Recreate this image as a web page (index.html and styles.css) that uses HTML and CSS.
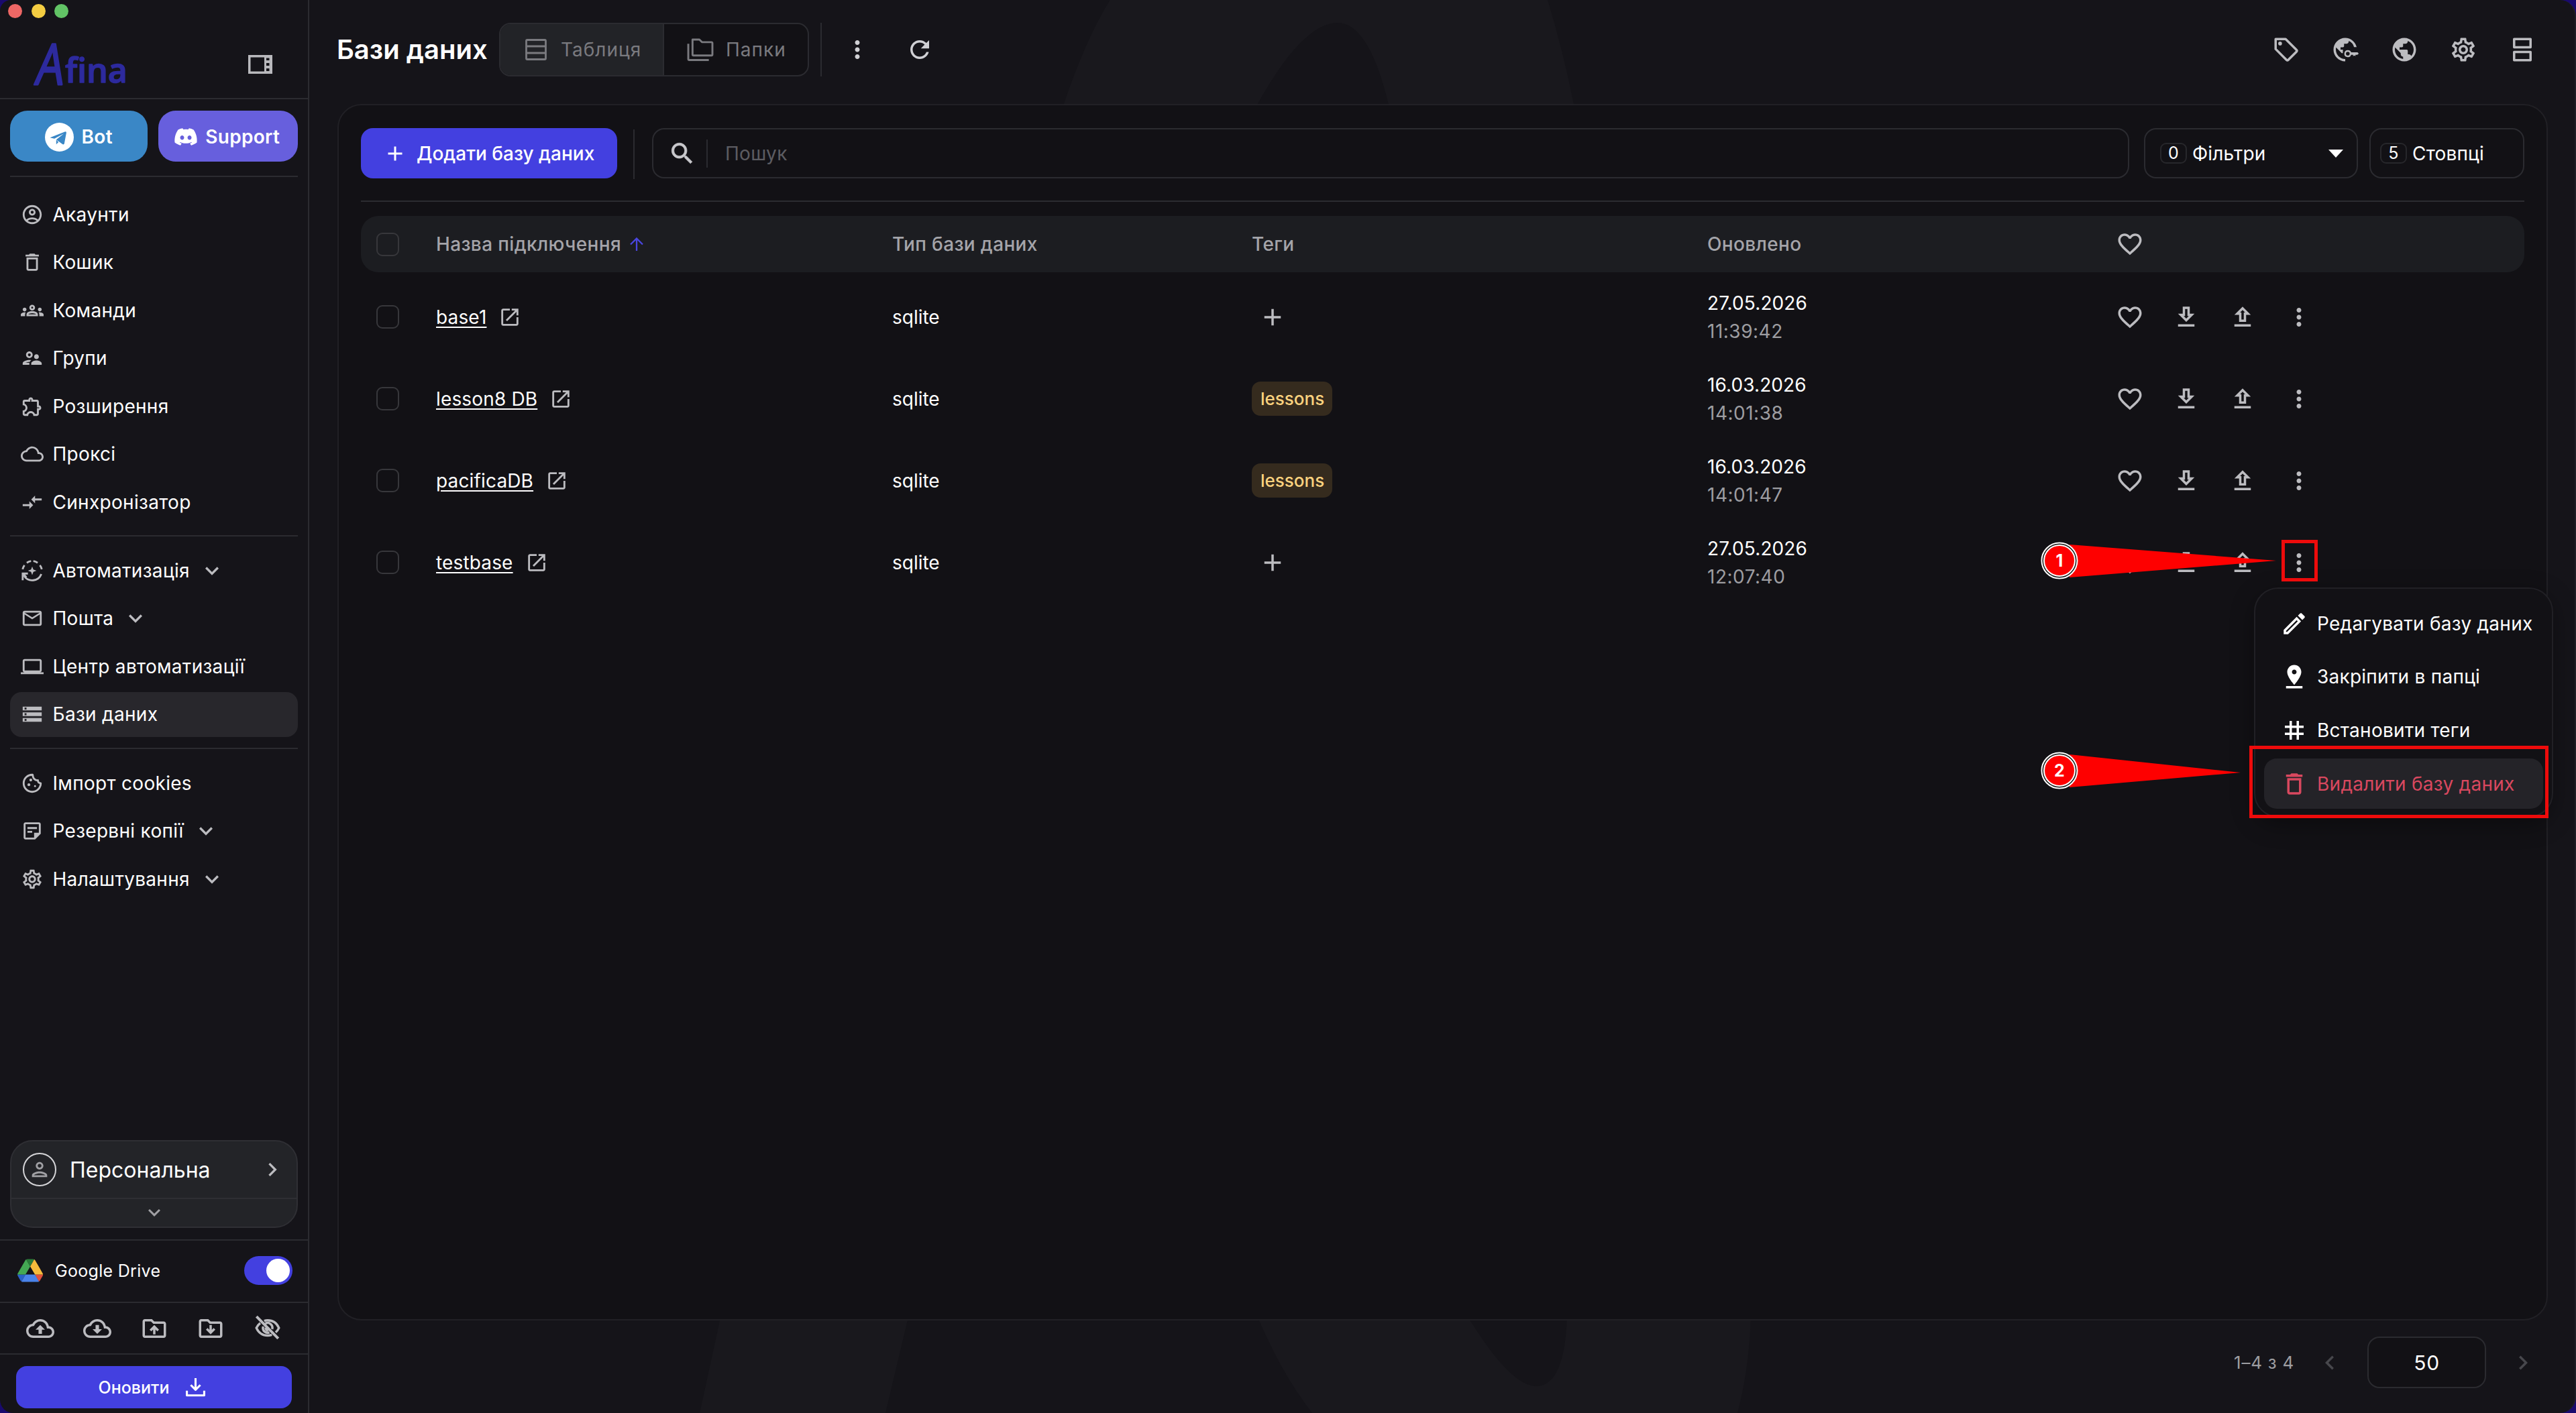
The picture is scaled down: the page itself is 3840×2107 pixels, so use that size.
FILE: index.html
```html
<!DOCTYPE html>
<html lang="uk">
<head>
    <meta charset="utf-8" />
    <title>Afina - Бази даних</title>
    <link rel="stylesheet" href="styles.css">
</head>
<body>
    <!-- icons -->
    <svg class="sprite">
        <symbol id="panel" viewBox="0 0 36 28"><path fill-rule="evenodd" d="M0 0h36v28H0zM3.5 3.500v21H24v-21zM27 4.500v3.500h4.500V4.500zM27 12v4h4.500v-4zM27 20v4h4.500v-4z"/></symbol>
        <symbol id="telegram" viewBox="0 0 128 128"><circle cx="64" cy="64" r="64" fill="#fff"/><path fill="#3a87c6" d="M22 66 88 40q8-2 7 5L86 92q-2 7-8 3L50 75l34-27-42 23z"/><path fill="#3a87c6" d="M50 76l0 20 10-10z"/></symbol>
        <symbol id="discord" viewBox="0 0 24 24"><path d="M19.27 5.33C17.94 4.71 16.5 4.26 15 4a.09.09 0 0 0-.07.03c-.18.33-.39.76-.53 1.09a16.09 16.09 0 0 0-4.8 0c-.14-.34-.35-.76-.54-1.09c-.01-.02-.04-.03-.07-.03c-1.5.26-2.93.71-4.27 1.33c-.01 0-.02.01-.03.02c-2.72 4.07-3.47 8.03-3.1 11.95c0 .02.01.04.03.05c1.8 1.32 3.53 2.12 5.24 2.65c.03.01.06 0 .07-.02c.4-.55.76-1.13 1.07-1.74c.02-.04 0-.08-.04-.09c-.57-.22-1.11-.48-1.64-.78c-.04-.02-.04-.08-.01-.11c.11-.08.22-.17.33-.25c.02-.02.05-.02.07-.01c3.44 1.57 7.15 1.57 10.55 0c.02-.01.05-.01.07.01c.11.09.22.17.33.26c.04.03.04.09-.01.11c-.52.31-1.07.56-1.64.78c-.04.01-.05.06-.04.09c.32.61.68 1.19 1.07 1.74c.03.01.06.02.09.01c1.72-.53 3.45-1.33 5.25-2.65c.02-.01.03-.03.03-.05c.44-4.53-.73-8.46-3.1-11.95c-.01-.01-.02-.02-.04-.02zM8.520 14.910c-1.030 0-1.890-.95-1.890-2.120s.84-2.120 1.890-2.120c1.060 0 1.900.96 1.890 2.120c0 1.170-.84 2.120-1.890 2.120zm6.970 0c-1.030 0-1.890-.95-1.890-2.120s.84-2.120 1.890-2.120c1.060 0 1.900.96 1.890 2.120c0 1.170-.83 2.120-1.890 2.120z"/></symbol>
        <symbol id="account" viewBox="0 0 24 24"><path d="M12 2C6.480 2 2 6.480 2 12s4.480 10 10 10 10-4.480 10-10S17.520 2 12 2zM7.350 18.500C8.660 17.560 10.260 17 12 17s3.340.56 4.650 1.500c-1.310.94-2.910 1.500-4.650 1.500s-3.340-.56-4.650-1.500zm10.790-1.380C16.450 15.800 14.320 15 12 15s-4.450.8-6.140 2.120C4.700 15.730 4 13.950 4 12c0-4.420 3.580-8 8-8s8 3.580 8 8c0 1.950-.7 3.730-1.860 5.120zM12 6c-1.930 0-3.500 1.570-3.500 3.500S10.070 13 12 13s3.500-1.570 3.500-3.500S13.930 6 12 6zm0 5c-.83 0-1.500-.67-1.500-1.500S11.170 8 12 8s1.500.67 1.500 1.500S12.830 11 12 11z"/></symbol>
        <symbol id="trash" viewBox="0 0 24 24"><path d="M6 19c0 1.100.9 2 2 2h8c1.100 0 2-.9 2-2V7H6v12zM8 9h8v10H8V9zm7.500-5-1-1h-5l-1 1H5v2h14V4z"/></symbol>
        <symbol id="groups" viewBox="0 0 24 24"><path d="M4 13c1.100 0 2-.9 2-2s-.9-2-2-2-2 .9-2 2 .9 2 2 2zm1.130 1.100c-.37-.06-.74-.1-1.130-.1-.99 0-1.930.21-2.780.58C.48 14.900 0 15.620 0 16.430V18h4.500v-1.610c0-.83.23-1.610.63-2.290zM20 13c1.100 0 2-.9 2-2s-.9-2-2-2-2 .9-2 2 .9 2 2 2zm4 3.430c0-.81-.48-1.530-1.220-1.850-.85-.37-1.790-.58-2.780-.58-.39 0-.76.04-1.130.1.4.68.63 1.460.63 2.290V18H24v-1.570zm-7.760-2.780c-1.170-.52-2.610-.9-4.240-.9s-3.070.39-4.240.9C6.680 14.130 6 15.210 6 16.390V18h12v-1.610c0-1.180-.68-2.260-1.760-2.740zM8.070 16c.09-.23.13-.39.91-.69.97-.38 1.990-.56 3.020-.56s2.050.18 3.020.56c.77.3.81.46.91.69H8.070zM12 8c.55 0 1 .45 1 1s-.45 1-1 1-1-.45-1-1 .45-1 1-1m0-2c-1.660 0-3 1.340-3 3s1.340 3 3 3 3-1.340 3-3-1.340-3-3-3z"/></symbol>
        <symbol id="people" viewBox="0 0 24 24"><path d="M9 12c1.930 0 3.500-1.570 3.500-3.500S10.930 5 9 5 5.500 6.570 5.500 8.500 7.070 12 9 12zm0-5c.83 0 1.500.67 1.500 1.500S9.830 10 9 10s-1.500-.67-1.500-1.500S8.170 7 9 7zm.05 10H4.770c.99-.5 2.700-1 4.230-1 .11 0 .23.01.34.01.34-.73.93-1.330 1.640-1.810-.73-.13-1.420-.2-1.980-.2-2.340 0-7 1.170-7 3.500V19h7v-1.500c0-.17.02-.34.05-.5zm7.450-2.500c-1.840 0-5.500 1.010-5.500 3V19h11v-1.500c0-1.990-3.660-3-5.500-3zm1.210-1.820c.76-.43 1.290-1.240 1.290-2.180C19 9.120 17.880 8 16.500 8S14 9.120 14 10.500c0 .94.53 1.750 1.290 2.180.36.2.77.32 1.210.32s.85-.12 1.210-.32z"/></symbol>
        <symbol id="extension" viewBox="0 0 24 24"><path d="M10.500 4.500c.28 0 .5.22.5.5v2h6v6h2c.28 0 .5.22.5.5s-.22.5-.5.5h-2v6h-2.120c-.68-1.750-2.390-3-4.380-3s-3.700 1.250-4.380 3H4v-2.120c1.750-.68 3-2.390 3-4.380 0-1.990-1.240-3.700-2.990-4.380L4 7h6V5c0-.28.22-.5.5-.5m0-2C9.120 2.500 8 3.620 8 5H4c-1.100 0-1.990.9-1.990 2v3.800h.29c1.490 0 2.700 1.210 2.700 2.700s-1.210 2.700-2.700 2.700H2V20c0 1.100.9 2 2 2h3.800v-.3c0-1.490 1.210-2.700 2.700-2.700s2.700 1.210 2.700 2.700v.3H17c1.100 0 2-.9 2-2v-4c1.380 0 2.500-1.120 2.500-2.500S20.380 11 19 11V7c0-1.100-.9-2-2-2h-4c0-1.380-1.120-2.500-2.500-2.500z"/></symbol>
        <symbol id="cloud" viewBox="0 0 24 24"><path d="M19.350 10.040C18.670 6.590 15.640 4 12 4 9.110 4 6.600 5.640 5.350 8.040 2.340 8.360 0 10.910 0 14c0 3.310 2.690 6 6 6h13c2.760 0 5-2.240 5-5 0-2.640-2.050-4.780-4.650-4.960zM19 18H6c-2.210 0-4-1.790-4-4 0-2.050 1.530-3.760 3.560-3.970l1.070-.11.5-.95C8.080 7.140 9.940 6 12 6c2.620 0 4.880 1.860 5.390 4.430l.3 1.500 1.530.11c1.560.1 2.780 1.410 2.780 2.960 0 1.650-1.350 3-3 3z"/></symbol>
        <symbol id="sync" viewBox="0 0 24 24"><path d="M9.010 14H2v2h7.010v3L13 15l-3.990-4v3zm5.980-1v-3H22V8h-7.010V5L11 9l3.990 4z"/></symbol>
        <symbol id="auto" viewBox="0 0 24 24"><path d="M12 7.500l1.200 3.300 3.300 1.200-3.300 1.200L12 16.500l-1.200-3.300L7.500 12l3.300-1.200z"/><path fill="none" stroke="currentColor" stroke-width="2" d="M21.600 15.500A10.200 10.200 0 0 1 3.500 17.500M1.900 10.500a10.200 10.200 0 0 1 2-4.300M6.300 3.700a10.200 10.200 0 0 1 4.500-1.800M13.200 1.900a10.200 10.200 0 0 1 4.500 1.800M20.100 6.200a10.200 10.200 0 0 1 2 4.300"/><path d="M1 14h6.500v2H4.600l2 2.200-1.500 1.500L3 17.500V22H1z"/></symbol>
        <symbol id="mail" viewBox="0 0 24 24"><path d="M22 6c0-1.100-.9-2-2-2H4c-1.100 0-2 .9-2 2v12c0 1.100.9 2 2 2h16c1.100 0 2-.9 2-2V6zm-2 0-8 5-8-5h16zm0 12H4V8l8 5 8-5v10z"/></symbol>
        <symbol id="laptop" viewBox="0 0 24 24"><path d="M20 18c1.100 0 1.990-.9 1.990-2L22 6c0-1.100-.9-2-2-2H4c-1.100 0-2 .9-2 2v10c0 1.100.9 2 2 2H0v2h24v-2h-4zM4 6h16v10H4V6z"/></symbol>
        <symbol id="storage" viewBox="0 0 24 24"><path d="M2 20h20v-4H2v4zm2-3h2v2H4v-2zM2 4v4h20V4H2zm4 3H4V5h2v2zm-4 7h20v-4H2v4zm2-3h2v2H4v-2z"/></symbol>
        <symbol id="cookie" viewBox="0 0 24 24"><path fill="none" stroke="currentColor" stroke-width="2" stroke-linejoin="round" d="M12.500 3A9 9 0 1 0 21 12c-1.800-.2-3-1.300-3-3.200-2.500.4-5.300-1.500-5.500-5.800z"/><circle cx="10.500" cy="8.500" r="1.500"/><circle cx="8.500" cy="13.500" r="1.500"/><circle cx="15" cy="15" r="1"/></symbol>
        <symbol id="note" viewBox="0 0 24 24"><path fill-rule="evenodd" d="M5 3h14c1.100 0 2 .9 2 2v10l-6 6H5c-1.100 0-2-.9-2-2V5c0-1.100.9-2 2-2zm0 2v14h9v-5h5V5z"/><path d="M7 8h10v2H7zM7 12h5v2H7z"/></symbol>
        <symbol id="settings" viewBox="0 0 24 24"><path d="M19.430 12.980c.04-.32.07-.64.07-.98 0-.34-.03-.66-.07-.98l2.110-1.650c.19-.15.24-.42.12-.64l-2-3.460c-.09-.16-.26-.25-.44-.25-.06 0-.12.01-.17.03l-2.490 1c-.52-.4-1.080-.73-1.690-.98l-.38-2.650C14.460 2.180 14.250 2 14 2h-4c-.25 0-.46.18-.49.42l-.38 2.650c-.61.25-1.170.59-1.690.98l-2.490-1c-.06-.02-.12-.03-.18-.03-.17 0-.34.09-.43.25l-2 3.460c-.13.22-.07.49.12.64l2.110 1.650c-.04.32-.07.65-.07.98 0 .33.03.66.07.98l-2.110 1.650c-.19.15-.24.42-.12.64l2 3.460c.09.16.26.25.44.25.06 0 .12-.01.17-.03l2.490-1c.52.4 1.080.73 1.690.98l.38 2.650c.03.24.24.42.49.42h4c.25 0 .46-.18.49-.42l.38-2.650c.61-.25 1.170-.59 1.690-.98l2.490 1c.06.02.12.03.18.03.17 0 .34-.09.43-.25l2-3.460c.12-.22.07-.49-.12-.64l-2.110-1.650zm-1.980-1.710c.04.31.05.52.05.73 0 .21-.02.43-.05.73l-.14 1.130.89.7 1.080.84-.7 1.210-1.270-.51-1.040-.42-.9.68c-.43.32-.84.56-1.250.73l-1.060.43-.16 1.130-.2 1.350h-1.400l-.19-1.350-.16-1.130-1.060-.43c-.43-.18-.83-.41-1.230-.71l-.91-.7-1.060.43-1.270.51-.7-1.210 1.080-.84.89-.7-.14-1.130c-.03-.31-.05-.54-.05-.74s.02-.43.05-.73l.14-1.130-.89-.7-1.080-.84.7-1.210 1.270.51 1.040.42.9-.68c.43-.32.84-.56 1.250-.73l1.060-.43.16-1.130.2-1.350h1.390l.19 1.350.16 1.130 1.060.43c.43.18.83.41 1.230.71l.91.7 1.060-.43 1.270-.51.7 1.210-1.070.85-.89.7.14 1.130zM12 8c-2.210 0-4 1.790-4 4s1.790 4 4 4 4-1.790 4-4-1.790-4-4-4zm0 6c-1.100 0-2-.9-2-2s.9-2 2-2 2 .9 2 2-.9 2-2 2z"/></symbol>
        <symbol id="down" viewBox="0 0 24 24"><path d="M16.590 8.590 12 13.170 7.410 8.590 6 10l6 6 6-6z"/></symbol>
        <symbol id="right" viewBox="0 0 24 24"><path d="M10 6 8.590 7.410 13.170 12l-4.580 4.590L10 18l6-6z"/></symbol>
        <symbol id="left" viewBox="0 0 24 24"><path d="M15.410 7.410 14 6l-6 6 6 6 1.410-1.410L10.830 12z"/></symbol>
        <symbol id="person" viewBox="0 0 24 24"><path d="M12 6c1.100 0 2 .9 2 2s-.9 2-2 2-2-.9-2-2 .9-2 2-2m0 10c2.700 0 5.800 1.290 6 2H6c.23-.72 3.310-2 6-2m0-12C9.790 4 8 5.790 8 8s1.790 4 4 4 4-1.790 4-4-1.790-4-4-4zm0 10c-2.670 0-8 1.340-8 4v2h16v-2c0-2.660-5.330-4-8-4z"/></symbol>
        <symbol id="gdrive" viewBox="0 0 87 78"><path fill="#2a62c8" d="m6.600 66.850 3.850 6.650c.8 1.400 1.950 2.500 3.300 3.300L27.500 53H0c0 1.550.4 3.100 1.200 4.500z"/><path fill="#44a853" d="M43.650 25 29.900 1.200c-1.350.8-2.500 1.900-3.300 3.300L1.200 48.500A9 9 0 0 0 0 53h27.500z"/><path fill="#e0503c" d="M73.550 76.800c1.350-.8 2.500-1.900 3.300-3.300l1.600-2.750L86.100 57.500c.8-1.400 1.200-2.950 1.200-4.500H59.800l5.850 11.500z"/><path fill="#2b7d3a" d="M43.650 25 57.400 1.200C56.050.4 54.500 0 52.900 0H34.400c-1.600 0-3.150.45-4.500 1.200z"/><path fill="#4a83ea" d="M59.800 53H27.500L13.750 76.800c1.350.8 2.900 1.200 4.500 1.200h50.800c1.600 0 3.150-.45 4.500-1.200z"/><path fill="#f6bb3c" d="m73.400 26.500-12.700-22c-.8-1.400-1.950-2.500-3.300-3.300L43.650 25 59.800 53h27.450c0-1.550-.4-3.100-1.200-4.500z"/></symbol>
        <symbol id="cloud-up" viewBox="0 0 24 24"><use href="#cloud"/><path d="M8 13h2.550v3.500h2.900V13H16l-4-4z"/></symbol>
        <symbol id="cloud-down" viewBox="0 0 24 24"><use href="#cloud"/><path d="M16 12.500h-2.550V9h-2.900v3.500H8l4 4z"/></symbol>
        <symbol id="folder" viewBox="0 0 24 24"><path d="M9.170 6l2 2H20v10H4V6h5.170M10 4H4c-1.100 0-1.990.9-1.990 2L2 18c0 1.100.9 2 2 2h16c1.100 0 2-.9 2-2V8c0-1.100-.9-2-2-2h-8l-2-2z"/></symbol>
        <symbol id="folder-up" viewBox="0 0 24 24"><use href="#folder"/><path d="M9.410 14.420 11 12.840V17h2v-4.160l1.590 1.590L16 13.010 12.010 9 8 13.010z"/></symbol>
        <symbol id="folder-down" viewBox="0 0 24 24"><use href="#folder"/><path d="M14.590 11.580 13 13.160V9h-2v4.160l-1.590-1.590L8 12.990 11.990 17 16 12.990z"/></symbol>
        <symbol id="eye-off" viewBox="0 0 24 24"><g fill="none" stroke="currentColor" stroke-width="2"><path d="M9 5.500q1.500-.5 3-.5c4.400 0 7.800 2.500 9.600 6.500-.7 1.500-1.600 2.800-2.800 3.800M15.600 17.300c-1.100.4-2.300.7-3.600.7-4.400 0-7.800-2.500-9.600-6.500.8-1.700 1.900-3.100 3.300-4.200"/><path d="M10 7.800a4 4 0 0 1 5.800 4.700M13.500 15.300a4 4 0 0 1-5.300-5"/><path d="M10.300 11.300q0 2.200 2.200 2.400"/><path d="M2.500 1.800 21 20.500" stroke-width="2.300"/></g></symbol>
        <symbol id="save" viewBox="0 0 24 24"><path fill="none" stroke="currentColor" stroke-width="2.400" stroke-linejoin="round" d="M12 1.500v13M6.500 9.500l5.500 5.500 5.500-5.500M2 16v5.500h20V16"/></symbol>
        <symbol id="table" viewBox="0 0 32 32"><path fill="none" stroke="currentColor" stroke-width="2.800" d="M3 1.500h26q1.500 0 1.500 1.500v26q0 1.500-1.500 1.500H3q-1.500 0-1.500-1.500V3q0-1.500 1.500-1.500zM1.500 11h29M1.500 21h29"/></symbol>
        <symbol id="folders" viewBox="0 0 40 36"><path fill="none" stroke="currentColor" stroke-width="3" stroke-linejoin="round" d="M8.500 2h10l4 4H37q1.500 0 1.500 1.500V25q0 1.500-1.500 1.500H9.500Q8 26.500 8 25V2zM1.500 8.500V32q0 1.500 1.500 1.500h30"/></symbol>
        <symbol id="dots" viewBox="0 0 24 24"><path d="M12 8c1.100 0 2-.9 2-2s-.9-2-2-2-2 .9-2 2 .9 2 2 2zm0 2c-1.100 0-2 .9-2 2s.9 2 2 2 2-.9 2-2-.9-2-2-2zm0 6c-1.100 0-2 .9-2 2s.9 2 2 2 2-.9 2-2-.9-2-2-2z"/></symbol>
        <symbol id="refresh" viewBox="0 0 24 24"><path d="M17.650 6.350C16.200 4.900 14.210 4 12 4c-4.420 0-7.990 3.580-7.990 8s3.570 8 7.990 8c3.730 0 6.840-2.550 7.730-6h-2.080c-.82 2.330-3.040 4-5.650 4-3.310 0-6-2.690-6-6s2.690-6 6-6c1.660 0 3.140.69 4.220 1.780L13 11h7V4l-2.350 2.350z"/></symbol>
        <symbol id="label" viewBox="0 0 24 24"><path fill="none" stroke="currentColor" stroke-width="2" stroke-linejoin="round" d="M3 3h8.500l9.200 9.200q.8.8 0 1.600l-6.900 6.900q-.8.8-1.600 0L3 11.500z"/><circle cx="6.800" cy="6.800" r="1.600"/></symbol>
        <symbol id="globe" viewBox="0 0 24 24"><path d="M12 2C6.480 2 2 6.480 2 12s4.480 10 10 10 10-4.480 10-10S17.520 2 12 2zm-1 17.930c-3.950-.49-7-3.850-7-7.930 0-.62.08-1.210.21-1.790L9 15v1c0 1.100.9 2 2 2v1.930zm6.900-2.540c-.26-.81-1-1.390-1.900-1.390h-1v-3c0-.55-.45-1-1-1H8v-2h2c.55 0 1-.45 1-1V7h2c1.100 0 2-.9 2-2v-.41c2.930 1.190 5 4.060 5 7.410 0 2.080-.8 3.970-2.100 5.390z"/></symbol>
        <symbol id="globe-key" viewBox="0 0 24 24"><path d="M12 22v-2C7.600 20 4 16.400 4 12c0-.62.080-1.210.210-1.790L9 15h1v-3H8v-2h2c.55 0 1-.45 1-1V7h2c1.100 0 2-.9 2-2v-.410A8 8 0 0 1 19.500 9.800h2.200C20.600 5.400 16.700 2 12 2 6.480 2 2 6.480 2 12s4.480 10 10 10z"/><path fill-rule="evenodd" d="M14.200 12.400a3 3 0 1 0 2.850 4h1.650v1.200l1-.6 1 .6v-1.200h1.600l1.200-1-1-1.100h-5.450a3 3 0 0 0-2.850-1.900zm0 1.400a1.600 1.600 0 1 1 0 3.200 1.600 1.600 0 0 1 0-3.200z"/></symbol>
        <symbol id="agenda" viewBox="0 0 24 24"><path fill="none" stroke="currentColor" stroke-width="2" stroke-linejoin="round" d="M5 3h14v7H5zM5 14h14v7H5z"/></symbol>
        <symbol id="search" viewBox="0 0 24 24"><path stroke="currentColor" stroke-width=".4" d="M15.500 14h-.79l-.28-.27C15.410 12.590 16 11.110 16 9.500 16 5.910 13.090 3 9.500 3S3 5.910 3 9.500 5.910 16 9.500 16c1.610 0 3.090-.59 4.230-1.570l.27.28v.79l5 4.990L20.490 19l-4.990-5zm-6 0C7.010 14 5 11.990 5 9.500S7.010 5 9.500 5 14 7.010 14 9.500 11.990 14 9.500 14z"/></symbol>
        <symbol id="plus" viewBox="0 0 24 24"><path d="M19 13h-6v6h-2v-6H5v-2h6V5h2v6h6z"/></symbol>
        <symbol id="arrow" viewBox="0 0 20 20"><path fill="none" stroke="currentColor" stroke-width="2.300" d="M10 20V1.500M1 10.500 10 1.500l9 9"/></symbol>
        <symbol id="heart" viewBox="0 0 24 24"><path d="M16.500 3c-1.740 0-3.410.81-4.500 2.090C10.910 3.810 9.240 3 7.500 3 4.420 3 2 5.420 2 8.500c0 3.780 3.400 6.860 8.550 11.540L12 21.350l1.450-1.320C18.600 15.360 22 12.280 22 8.500 22 5.420 19.580 3 16.500 3zm-4.400 15.550-.1.1-.1-.1C7.140 14.240 4 11.390 4 8.500 4 6.500 5.500 5 7.500 5c1.540 0 3.040.99 3.570 2.360h1.870C13.460 5.990 14.960 5 16.500 5c2 0 3.500 1.500 3.500 3.500 0 2.890-3.140 5.740-7.900 10.050z"/></symbol>
        <symbol id="download" viewBox="0 0 24 24"><path d="M19 9h-4V3H9v6H5l7 7 7-7zm-8 2V5h2v6h1.170L12 13.170 9.830 11H11zm-6 7h14v2H5z"/></symbol>
        <symbol id="upload" viewBox="0 0 24 24"><path d="M9 16h6v-6h4l-7-7-7 7h4v6zm3-10.170L14.170 8H13v6h-2V8H9.830L12 5.830zM5 18h14v2H5z"/></symbol>
        <symbol id="open" viewBox="0 0 24 24"><path d="M19 19H5V5h7V3H5c-1.110 0-2 .9-2 2v14c0 1.100.89 2 2 2h14c1.100 0 2-.9 2-2v-7h-2v7zM14 3v2h3.590l-9.830 9.830 1.410 1.410L19 6.410V10h2V3h-7z"/></symbol>
        <symbol id="edit" viewBox="0 0 24 24"><path d="M14.060 9.020l.92.92L5.920 19H5v-.92l9.060-9.060M17.660 3c-.25 0-.51.1-.7.29l-1.830 1.830 3.750 3.750 1.830-1.830c.39-.39.39-1.020 0-1.410l-2.340-2.340c-.2-.2-.45-.29-.71-.29zm-3.600 3.190L3 17.250V21h3.750L17.810 9.940l-3.750-3.750z"/></symbol>
        <symbol id="pin" viewBox="0 0 24 24"><path d="M18 8c0-3.310-2.690-6-6-6S6 4.690 6 8c0 4.500 6 11 6 11s6-6.500 6-11zm-8 0c0-1.100.9-2 2-2s2 .9 2 2-.89 2-2 2c-1.100 0-2-.9-2-2zM5 20v2h14v-2H5z"/></symbol>
        <symbol id="hash" viewBox="0 0 24 24"><path d="M20 10V8h-4V4h-2v4h-4V4H8v4H4v2h4v4H4v2h4v4h2v-4h4v4h2v-4h4v-2h-4v-4h4zm-6 4h-4v-4h4v4z"/></symbol>
    </svg>

    <div class="window">
        <aside class="sidebar">
            <div class="top">
                <div class="lights"><i class="red"></i><i class="yellow"></i><i class="green"></i></div>
                <div class="brand">
                    <svg class="logo" width="150" height="76" viewBox="0 0 150 76">
                        <text class="logo-a" transform="translate(7 68) skewX(-8) scale(.78 1)">A</text>
                        <text class="logo-rest" x="53" y="65">fina</text>
                    </svg>
                    <svg class="panel-icon"><use href="#panel"/></svg>
                </div>
            </div>
            <div class="links">
                <a class="bot"><svg><use href="#telegram"/></svg>Bot</a>
                <a class="support"><svg><use href="#discord"/></svg>Support</a>
            </div>
            <nav>
                <ul>
                    <li><svg><use href="#account"/></svg>Акаунти</li>
                    <li><svg><use href="#trash"/></svg>Кошик</li>
                    <li><svg><use href="#groups"/></svg>Команди</li>
                    <li><svg><use href="#people"/></svg>Групи</li>
                    <li><svg><use href="#extension"/></svg>Розширення</li>
                    <li><svg><use href="#cloud"/></svg>Проксі</li>
                    <li><svg><use href="#sync"/></svg>Синхронізатор</li>
                </ul>
                <ul>
                    <li><svg><use href="#auto"/></svg>Автоматизація<svg class="more"><use href="#down"/></svg></li>
                    <li><svg><use href="#mail"/></svg>Пошта<svg class="more"><use href="#down"/></svg></li>
                    <li><svg><use href="#laptop"/></svg>Центр автоматизації</li>
                    <li class="active"><svg><use href="#storage"/></svg>Бази даних</li>
                </ul>
                <ul>
                    <li><svg><use href="#cookie"/></svg>Імпорт cookies</li>
                    <li><svg><use href="#note"/></svg>Резервні копії<svg class="more"><use href="#down"/></svg></li>
                    <li><svg><use href="#settings"/></svg>Налаштування<svg class="more"><use href="#down"/></svg></li>
                </ul>
            </nav>
            <div class="profile">
                <div class="profile-main">
                    <span class="avatar"><svg><use href="#person"/></svg></span>
                    <span class="profile-name">Персональна</span>
                    <svg class="go"><use href="#right"/></svg>
                </div>
                <div class="profile-more"><svg><use href="#down"/></svg></div>
            </div>
            <div class="drive">
                <svg><use href="#gdrive"/></svg>
                <span>Google Drive</span>
                <i class="toggle"></i>
            </div>
            <div class="tools">
                <svg><use href="#cloud-up"/></svg>
                <svg><use href="#cloud-down"/></svg>
                <svg><use href="#folder-up"/></svg>
                <svg><use href="#folder-down"/></svg>
                <svg><use href="#eye-off"/></svg>
            </div>
            <div class="update">
                <button>Оновити<svg><use href="#save"/></svg></button>
            </div>
        </aside>

        <main>
            <svg class="watermark" viewBox="0 0 3378 2107">
                <path d="M1123 160Q1160 50 1200-10H1843Q1868 70 1886 160H1610Q1580 34 1533 34 1480 34 1411 160z"/>
                <path d="M614 1960 582 2107H859L894 1960zM1412 1960Q1450 2050 1495 2107H2129Q2147 2040 2149 1960H1875Q1872 2067 1829 2067 1790 2067 1725 1960z"/>
            </svg>
            <header>
                <h1>Бази даних</h1>
                <div class="tabs">
                    <div class="tab on"><svg class="i-table"><use href="#table"/></svg>Таблиця</div>
                    <div class="tab"><svg class="i-folders"><use href="#folders"/></svg>Папки</div>
                </div>
                <div class="header-actions">
                    <svg><use href="#dots"/></svg>
                    <svg><use href="#refresh"/></svg>
                </div>
                <div class="header-icons">
                    <svg><use href="#label"/></svg>
                    <svg><use href="#globe-key"/></svg>
                    <svg><use href="#globe"/></svg>
                    <svg><use href="#settings"/></svg>
                    <svg><use href="#agenda"/></svg>
                </div>
            </header>

            <section class="panel">
                <div class="toolbar">
                    <button class="add"><svg><use href="#plus"/></svg>Додати базу даних</button>
                    <div class="search"><svg><use href="#search"/></svg><span>Пошук</span></div>
                    <div class="filter"><b>0</b>Фільтри<i class="caret"></i></div>
                    <div class="columns"><b>5</b>Стовпці</div>
                </div>

                <div class="row head">
                    <i class="check"></i>
                    <div class="name">Назва підключення<svg class="sort"><use href="#arrow"/></svg></div>
                    <div>Тип бази даних</div>
                    <div>Теги</div>
                    <div>Оновлено</div>
                    <div class="actions"><svg><use href="#heart"/></svg></div>
                </div>
                <div class="row">
                    <i class="check"></i>
                    <div class="name"><a>base1</a><svg><use href="#open"/></svg></div>
                    <div class="type">sqlite</div>
                    <div><svg class="add-tag"><use href="#plus"/></svg></div>
                    <div class="date">27.05.2026<small>11:39:42</small></div>
                    <div class="actions"><svg><use href="#heart"/></svg><svg><use href="#download"/></svg><svg><use href="#upload"/></svg><svg><use href="#dots"/></svg></div>
                </div>
                <div class="row">
                    <i class="check"></i>
                    <div class="name"><a>lesson8 DB</a><svg><use href="#open"/></svg></div>
                    <div class="type">sqlite</div>
                    <div><span class="chip">lessons</span></div>
                    <div class="date">16.03.2026<small>14:01:38</small></div>
                    <div class="actions"><svg><use href="#heart"/></svg><svg><use href="#download"/></svg><svg><use href="#upload"/></svg><svg><use href="#dots"/></svg></div>
                </div>
                <div class="row">
                    <i class="check"></i>
                    <div class="name"><a>pacificaDB</a><svg><use href="#open"/></svg></div>
                    <div class="type">sqlite</div>
                    <div><span class="chip">lessons</span></div>
                    <div class="date">16.03.2026<small>14:01:47</small></div>
                    <div class="actions"><svg><use href="#heart"/></svg><svg><use href="#download"/></svg><svg><use href="#upload"/></svg><svg><use href="#dots"/></svg></div>
                </div>
                <div class="row">
                    <i class="check"></i>
                    <div class="name"><a>testbase</a><svg><use href="#open"/></svg></div>
                    <div class="type">sqlite</div>
                    <div><svg class="add-tag"><use href="#plus"/></svg></div>
                    <div class="date">27.05.2026<small>12:07:40</small></div>
                    <div class="actions"><svg><use href="#heart"/></svg><svg><use href="#download"/></svg><svg><use href="#upload"/></svg><svg><use href="#dots"/></svg></div>
                </div>
            </section>

            <footer>
                <span>1–4 з 4</span>
                <svg class="prev"><use href="#left"/></svg>
                <div class="size">50</div>
                <svg class="next"><use href="#right"/></svg>
            </footer>
        </main>

        <div class="menu">
            <div class="item"><svg><use href="#edit"/></svg>Редагувати базу даних</div>
            <div class="item"><svg><use href="#pin"/></svg>Закріпити в папці</div>
            <div class="item"><svg><use href="#hash"/></svg>Встановити теги</div>
            <div class="item danger"><svg><use href="#trash"/></svg>Видалити базу даних</div>
        </div>

        <!-- step markers -->
        <div class="frame frame-1"></div>
        <div class="frame frame-2"></div>
        <svg class="step step-1" viewBox="0 0 360 60"><path d="M44 6 352 30 44 55z"/><circle cx="29" cy="30" r="26.500"/><circle class="ring" cx="29" cy="30" r="23"/><text x="29" y="39">1</text></svg>
        <svg class="step step-2" viewBox="0 0 360 60"><path d="M44 6 299 33 44 55z"/><circle cx="29" cy="30" r="26.500"/><circle class="ring" cx="29" cy="30" r="23"/><text x="29" y="39">2</text></svg>
    </div>
</body>
</html>
```
FILE: styles.css
```css
* {
    box-sizing: border-box;
}

body {
    margin: 0;
    background-color: #190a6e;
    color: #fff;
    font-family: 'Inter', sans-serif;
    font-size: 28px;
    letter-spacing: 0.3px;
}

h1, ul {
    margin: 0;
    padding: 0;
    list-style: none;
}

i, b {
    font-style: normal;
}

svg {
    display: block;
    flex: none;
    fill: currentColor;
}

button {
    border: 0;
    color: #fff;
    font-family: inherit;
    background-color: #4340e0;
}

.sprite {
    display: none;
}

.window {
    position: relative;
    display: flex;
    width: 3840px;
    height: 2107px;
    border-right: 2px solid #1f1e24;
    border-radius: 16px 24px 24px 20px;
    background-color: #151419;
    overflow: hidden;
}

/* sidebar */
.sidebar {
    display: flex;
    flex-direction: column;
    flex: none;
    width: 461px;
    border-right: 2px solid #2b2b30;
}

.top {
    height: 148px;
    border-bottom: 2px solid #2b2b30;
}

.lights {
    display: flex;
    gap: 13.500px;
    padding: 6px 0 0 12px;
}

.lights i {
    width: 21px;
    height: 21px;
    border-radius: 50%;
}

.red { background-color: #ee6765; }
.yellow { background-color: #f4cd42; }
.green { background-color: #62c466; }

.brand {
    display: flex;
    align-items: center;
    justify-content: space-between;
    padding: 31px 53px 0 44px;
}

.logo {
    fill: #2d2a9e;
    stroke: #2d2a9e;
    stroke-linejoin: round;
    overflow: visible;
    letter-spacing: 0;
}

.logo-a {
    font: 400 84px 'Open Sans', sans-serif;
    stroke-width: 3px;
}

.logo-rest {
    font: 600 50px 'Open Sans', sans-serif;
    stroke-width: 1.500px;
}

.panel-icon {
    width: 36px;
    height: 28px;
    color: #b9b9bd;
}

.links {
    display: flex;
    gap: 16px;
    margin: 17px 15px 0;
    padding-bottom: 21px;
    border-bottom: 2px solid #2b2b30;
    font-weight: 600;
}

.links a {
    display: flex;
    flex: 1;
    align-items: center;
    justify-content: center;
    gap: 12px;
    height: 76px;
    padding-top: 2px;
    border-radius: 26px;
}

.links .support {
    gap: 10px;
    padding-right: 4px;
}

.bot { background-color: #3a87c6; }
.support { background-color: #675fdd; }
.bot svg { width: 43px; height: 43px; }
.support svg { width: 38px; height: 38px; }

nav {
    flex: 1;
    padding: 22px 15px 0;
}

nav ul {
    display: flex;
    flex-direction: column;
    gap: 4.250px;
    padding-bottom: 16px;
}

nav ul + ul {
    padding-top: 17px;
    border-top: 2px solid #2b2b30;
}

nav li {
    display: flex;
    align-items: center;
    height: 67.250px;
    padding-left: 16px;
    border-radius: 17px;
}

nav li.active {
    background-color: #28272c;
}

nav li svg {
    width: 34px;
    height: 34px;
    margin-right: 13.500px;
    color: #bcbcc0;
}

nav li .more {
    width: 40px;
    height: 40px;
    margin: 0 0 0 13px;
}

.profile {
    height: 131px;
    margin: 0 15px 17px;
    border: 2px solid #2f2f34;
    border-radius: 34px;
    background-color: #232428;
}

.profile-main {
    display: flex;
    align-items: center;
    height: 86px;
    padding: 0 16px 0 17px;
    border-bottom: 2px solid #2f2f34;
    font-size: 32px;
    letter-spacing: 0;
}

.avatar {
    display: flex;
    align-items: center;
    justify-content: center;
    width: 50px;
    height: 50px;
    margin-right: 20px;
    border: 2px solid #d5d5d8;
    border-radius: 50%;
    color: #a0a0a4;
}

.avatar svg {
    width: 34px;
    height: 34px;
}

.go {
    width: 40px;
    height: 40px;
    margin-left: auto;
    color: #bcbcc0;
}

.profile-more {
    display: flex;
    justify-content: center;
    padding-top: 2px;
    color: #a0a0a4;
}

.profile-more svg {
    width: 36px;
    height: 36px;
}

.drive {
    display: flex;
    align-items: center;
    height: 93px;
    padding: 0 23px 2px 26px;
    border-top: 2px solid #2b2b30;
    font-size: 25px;
}

.drive svg {
    width: 38px;
    height: 35px;
    margin-right: 18px;
}

.toggle {
    display: flex;
    justify-content: flex-end;
    width: 72px;
    height: 43px;
    margin-left: auto;
    padding: 4px;
    border-radius: 22px;
    background-color: #4340e0;
}

.toggle::before {
    content: "";
    width: 35px;
    height: 35px;
    border-radius: 50%;
    background-color: #fff;
}

.tools {
    display: flex;
    align-items: center;
    justify-content: space-between;
    height: 77px;
    padding: 0 39px;
    border-top: 2px solid #2b2b30;
    color: #bcbcc0;
}

.tools svg {
    width: 42px;
    height: 42px;
}

.update {
    height: 89px;
    padding: 17px 24px 0;
    border-top: 2px solid #2b2b30;
}

.update button {
    display: flex;
    align-items: center;
    justify-content: center;
    gap: 24px;
    width: 100%;
    height: 63px;
    border-radius: 16px;
    font-size: 25px;
    font-weight: 500;
    padding: 0 5px 0 0;
}

.update svg {
    width: 31px;
    height: 31px;
}

/* content */
main {
    position: relative;
    display: flex;
    flex-direction: column;
    flex: 1;
    padding: 0 40px 0 42px;
}

.watermark {
    position: absolute;
    inset: 0;
    width: 3378px;
    height: 2107px;
    fill: #19181d;
}

header {
    position: relative;
    display: flex;
    align-items: flex-start;
    height: 155px;
    padding-top: 34px;
}

h1 {
    width: 241px;
    font-size: 40px;
    font-weight: 600;
    line-height: 80px;
    letter-spacing: 0;
    white-space: nowrap;
    text-indent: -1px;
}

.tabs {
    display: flex;
    height: 80px;
    border: 2px solid #2b2b30;
    border-radius: 17px;
    background-color: #121115;
    overflow: hidden;
    color: #7a7a7f;
    letter-spacing: 1px;
}

.tab {
    display: flex;
    align-items: center;
    width: 214px;
    padding-left: 34px;
}

.tab.on {
    width: 244px;
    padding-left: 37px;
    border-right: 2px solid #2b2b30;
    background-color: #222327;
}

.i-table {
    width: 32px;
    height: 32px;
    margin-right: 21px;
}

.i-folders {
    width: 40px;
    height: 35px;
    margin-right: 18px;
}

.header-actions {
    display: flex;
    align-items: center;
    gap: 51px;
    height: 80px;
    margin-left: 17px;
    padding-left: 32px;
    border-left: 2px solid #2b2b30;
    color: #d0d0d4;
}

.header-actions svg,
.header-icons svg {
    width: 42px;
    height: 42px;
}

.header-icons {
    display: flex;
    align-items: center;
    gap: 46px;
    height: 80px;
    margin-left: auto;
    padding-right: 17px;
    color: #bcbcc0;
}

.panel {
    position: relative;
    flex: none;
    height: 1814px;
    padding: 34px 33px;
    border: 2px solid #212025;
    border-radius: 36px;
    background-color: #121115;
}

.toolbar {
    display: flex;
    height: 110px;
    margin-bottom: 21px;
    border-bottom: 2px solid #2c2c31;
}

.toolbar > * {
    display: flex;
    align-items: center;
    height: 75px;
    border: 2px solid #2b2b30;
    border-radius: 18px;
}

.toolbar .add {
    width: 382px;
    padding: 0 0 0 33px;
    border: 0;
    font-size: 28px;
    font-weight: 500;
    letter-spacing: 0;
}

.add svg {
    width: 36px;
    height: 36px;
    margin-right: 14px;
}

.toolbar .search {
    position: relative;
    flex: 1;
    margin: 0 22px 0 52px;
    padding-left: 22px;
    color: #5c5c61;
}

/* divider between the button and the search field */
.toolbar .search::before {
    content: "";
    position: absolute;
    left: -30px;
    top: 0;
    width: 2px;
    height: 74px;
    background-color: #2b2b30;
}

.search svg {
    width: 42px;
    height: 42px;
    color: #c8c8cc;
}

.search span {
    margin-left: 15px;
    padding-left: 26px;
    border-left: 2px solid #2b2b30;
    line-height: 42px;
}

.filter {
    width: 319px;
    margin-right: 17px;
    padding: 0 20px 0 22px;
    letter-spacing: 0.15px;
}

.columns {
    width: 231px;
    padding-left: 14px;
    letter-spacing: 0.2px;
}

.toolbar b {
    width: 40px;
    height: 31px;
    margin-right: 8px;
    border: 2px solid #27272b;
    border-radius: 9px;
    font-size: 25px;
    font-weight: 400;
    line-height: 27px;
    text-align: center;
}

.caret {
    margin-left: auto;
    border: 11px solid transparent;
    border-top: 12px solid #fff;
    border-bottom: 0;
}

.row {
    display: grid;
    grid-template-columns: 112px 680px 536px 679px 609px 1fr;
    align-items: center;
    height: 121.900px;
    letter-spacing: 0.15px;
}

.row.head {
    height: 84px;
    margin-bottom: 6px;
    border-radius: 26px;
    background-color: #1c1d21;
    color: #a4a4a9;
    font-weight: 500;
    letter-spacing: 0.35px;
}

.check {
    width: 34px;
    height: 35px;
    margin-left: 23px;
    border: 2px solid #37373b;
    border-radius: 9px;
}

.name {
    display: flex;
    align-items: center;
}

.name a {
    text-decoration: underline;
    text-decoration-thickness: 2px;
    text-underline-offset: 4px;
}

.name svg {
    width: 34px;
    height: 34px;
    margin-left: 18px;
    color: #bcbcc0;
}

.name .sort {
    width: 20px;
    height: 20px;
    margin-left: 13px;
    color: #4a46e0;
}

.type {
    letter-spacing: 0;
}

.add-tag {
    width: 42px;
    height: 42px;
    margin-left: 10px;
    color: #bcbcc0;
}

.chip {
    display: inline-block;
    padding: 0 12px 0 13px;
    border-radius: 13px;
    background-color: #352b1e;
    color: #fbd27e;
    font-size: 26px;
    font-weight: 500;
    line-height: 51px;
    letter-spacing: 0;
    vertical-align: middle;
}

.date {
    padding-top: 1px;
    line-height: 42px;
    letter-spacing: 0.1px;
}

.date small {
    display: block;
    color: #9d9da1;
    font-size: 28px;
    letter-spacing: 0.5px;
}

.actions {
    display: flex;
    gap: 42px;
    color: #bcbcc0;
}

.actions svg {
    width: 42px;
    height: 42px;
}

footer {
    position: relative;
    display: flex;
    align-items: center;
    justify-content: flex-end;
    height: 125px;
    padding-right: 16px;
    color: #9d9da1;
    font-size: 26px;
    letter-spacing: 0.75px;
}

footer svg {
    width: 42px;
    height: 42px;
    color: #47474c;
}

.prev {
    margin: 0 35px 0 32px;
}

.next {
    margin-left: 34px;
}

.size {
    width: 177px;
    height: 77px;
    border: 2px solid #2b2b30;
    border-radius: 18px;
    background-color: #121115;
    color: #fff;
    font-size: 30px;
    line-height: 75px;
    text-align: center;
}

/* context menu */
.menu {
    position: absolute;
    left: 3360px;
    top: 876px;
    width: 446px;
    height: 343px;
    padding: 14px 13px 12px;
    border: 2px solid #212025;
    border-radius: 36px;
    background-color: #121115;
    box-shadow: 0 10px 34px rgba(0, 0, 0, 0.35);
}

.item {
    display: flex;
    align-items: center;
    height: 75px;
    margin-bottom: 4.700px;
    padding-left: 24px;
    border-radius: 19px;
    letter-spacing: 0.25px;
    white-space: nowrap;
}

.item svg {
    width: 42px;
    height: 42px;
    margin-right: 13px;
}

.danger {
    background-color: #242328;
    color: #d9485f;
}

.frame {
    position: absolute;
    border: 5px solid #ee0b0b;
}

.frame-1 {
    left: 3401px;
    top: 805px;
    width: 54px;
    height: 62px;
}

.frame-2 {
    left: 3353px;
    top: 1112px;
    width: 446px;
    height: 108px;
}

.step {
    position: absolute;
    left: 3041px;
    width: 360px;
    height: 60px;
    fill: #fe0000;
}

.step-1 { top: 806px; }
.step-2 { top: 1119px; }

.step circle {
    fill: #141414;
    stroke: #fff;
    stroke-width: 2px;
}

.step .ring {
    fill: #fe0000;
}

.step text {
    fill: #fff;
    font-size: 25px;
    font-weight: 700;
    text-anchor: middle;
}
```
